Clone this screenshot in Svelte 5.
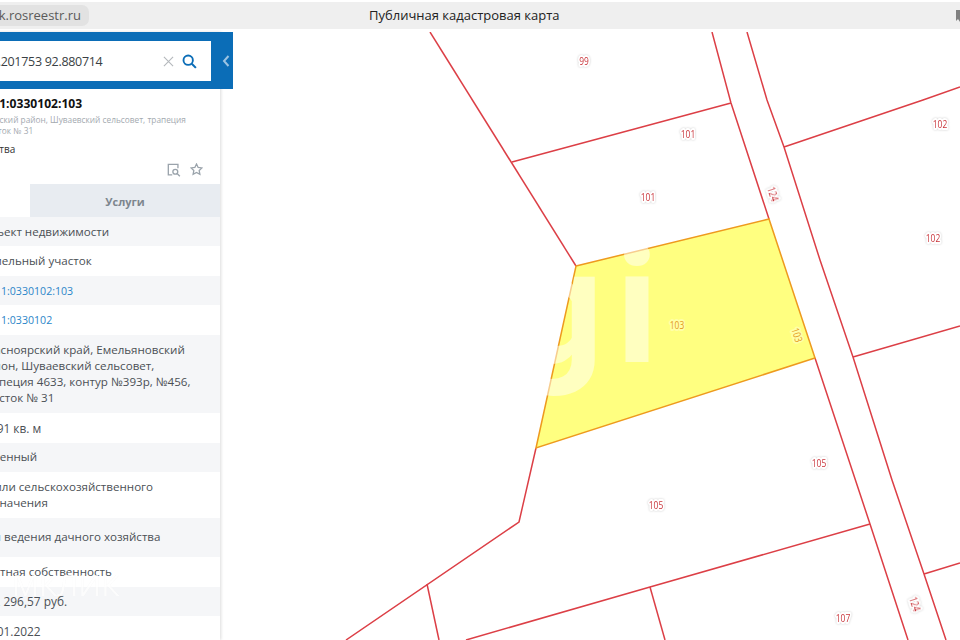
<script lang="ts">
  const rows = [
    { text: 'Объект недвижимости' },
    { text: 'Земельный участок' },
    { text: '24:11:0330102:103', link: true },
    { text: '24:11:0330102', link: true },
    { text: 'Красноярский край, Емельяновский\nрайон, Шуваевский сельсовет,\nтрапеция 4633, контур №393р, №456,\nучасток № 31' },
    { text: '2 491 кв. м', num: true },
    { text: 'Учтенный' },
    { text: 'Земли сельскохозяйственного\nназначения' },
    { text: 'Для ведения дачного хозяйства', tall: true },
    { text: 'Частная собственность' },
    { text: '182 296,57 руб.', num: true },
    { text: '19.01.2022', num: true }
  ];

  const lines = [
    [[430, 32], [576, 266]],
    [[512, 162], [731, 103]],
    [[712, 32], [731, 103], [769, 219]],
    [[815, 358], [870, 524], [908, 640]],
    [[747, 32], [767, 100], [784, 147], [820, 260], [853, 357], [892, 480], [924, 574], [946, 640]],
    [[784, 147], [923, 100], [960, 87]],
    [[853, 357], [960, 326]],
    [[924, 574], [960, 563]],
    [[870, 524], [650, 587], [466, 640]],
    [[650, 587], [665, 640]],
    [[536, 448], [519, 522], [346, 640]],
    [[427, 584], [439, 640]]
  ];

  const labels = [
    { t: '99', x: 584, y: 61 },
    { t: '101', x: 688, y: 134 },
    { t: '101', x: 648, y: 197 },
    { t: '102', x: 940, y: 124 },
    { t: '102', x: 933, y: 238 },
    { t: '124', x: 773, y: 194, r: 72 },
    { t: '105', x: 819, y: 463 },
    { t: '105', x: 656, y: 505 },
    { t: '107', x: 843, y: 618 },
    { t: '124', x: 915, y: 604, r: 72 }
  ];

  const points = (l: number[][]) => l.map((p) => p.join(',')).join(' ');
</script>

<div class="page">
  <header class="chrome">
    <div class="url">pkk.rosreestr.ru</div>
    <div class="tab-title">Публичная кадастровая карта</div>
    <svg class="bookmark" width="4" height="12" viewBox="0 0 4 12"><path d="M0 0h4v12l-2-3-2 2z" fill="#808080" /></svg>
  </header>

  <main class="stage">
    <svg class="map" width="960" height="608" viewBox="0 32 960 608">
      <polygon class="parcel" points="576,266 769,219 815,358 536,448" />
      {#each lines as l}
        <polyline class="boundary" points={points(l)} />
      {/each}
      <polygon class="parcel-edge" points="576,266 769,219 815,358 536,448" />
      {#each labels as l}
        <text class="label" x={l.x} y={l.y + 3.7} textLength={l.t.length * 4.8} lengthAdjust="spacingAndGlyphs" transform={l.r ? `rotate(${l.r} ${l.x} ${l.y})` : undefined}>{l.t}</text>
      {/each}
      <text class="label orange" x="677" y="328.7" textLength="14.4" lengthAdjust="spacingAndGlyphs">103</text>
      <text class="label orange" x="797" y="338.7" textLength="14.4" lengthAdjust="spacingAndGlyphs" transform="rotate(72 797 335)">103</text>
      <text class="mark" x="511" y="362">gi</text>
    </svg>

    <aside class="panel">
      <div class="search-bar">
        <div class="search">
          <span class="query">56.201753 92.880714</span>
          <svg class="clear" width="11" height="11" viewBox="0 0 12 12"><path d="M1 1l10 10M11 1L1 11" stroke="#b4b8bc" stroke-width="1.2" fill="none" /></svg>
          <svg class="find" width="15" height="15" viewBox="0 0 16 16"><circle cx="6.6" cy="6.6" r="5" stroke="#0b6db7" stroke-width="2" fill="none" /><path d="M10.4 10.4l4.4 4.4" stroke="#0b6db7" stroke-width="2.2" fill="none" /></svg>
        </div>
        <svg class="collapse" width="8" height="12" viewBox="0 0 8 12"><path d="M6.5 1L2 6l4.5 5" stroke="#9cc3e2" stroke-width="2" fill="none" /></svg>
      </div>

      <section class="summary">
        <h1>24:11:0330102:103</h1>
        <p class="address">яновский район, Шуваевский сельсовет, трапеция<br />участок № 31</p>
        <p class="kind">Свойства</p>
        <div class="actions">
          <svg width="14" height="14" viewBox="0 0 16 16" fill="none" stroke="#9aa3ab" stroke-width="1.5"><path d="M6 13.5H1.5V1.5h11V6" /><circle cx="9.5" cy="10" r="2.8" /><path d="M11.5 12l3.2 3.2" /></svg>
          <svg width="13" height="13" viewBox="0 0 15 15" fill="none" stroke="#9aa3ab" stroke-width="1.5"><path d="M7.5 1.2l1.9 4 4.4.5-3.2 3 .8 4.4-3.9-2.2-3.9 2.2.8-4.4-3.2-3 4.4-.5z" /></svg>
        </div>
      </section>

      <nav class="tabs">
        <div class="tab active"></div>
        <div class="tab">Услуги</div>
      </nav>

      <div class="rows">
        {#each rows as row}
          <div class="row" class:tall={row.tall} class:link={row.link} class:num={row.num}>{row.text}</div>
        {/each}
      </div>
      <div class="stamp">МКЛИК</div>
    </aside>
  </main>
</div>

<style>
  :global(body) {
    margin: 0;
    background: #fff;
  }

  .page {
    width: 960px;
    height: 640px;
    display: flex;
    flex-direction: column;
    overflow: hidden;
    font-family: "Open Sans", sans-serif;
    background: #fff;
  }

  .chrome {
    height: 27px;
    margin: 2px 0 3px;
    flex: none;
    display: flex;
    align-items: center;
    background: #efefef;
  }

  .url {
    width: 109px;
    height: 21px;
    margin-left: -20px;
    flex: none;
    box-sizing: border-box;
    padding-right: 8px;
    border-radius: 0 7px 7px 0;
    background: #e2e2e2;
    color: #5a5a5a;
    font-size: 13px;
    line-height: 21px;
    text-align: right;
  }

  .tab-title {
    margin-left: 280px;
    padding-bottom: 2px;
    color: #222;
    font-size: 13px;
  }

  .bookmark {
    margin-left: auto;
  }

  .stage {
    position: relative;
    flex: 1;
    min-height: 0;
  }

  .map {
    position: absolute;
    inset: 0;
  }

  .parcel {
    fill: #ffff80;
  }

  .parcel-edge {
    fill: none;
    stroke: #ee9a1e;
    stroke-width: 1.5;
  }

  .boundary {
    fill: none;
    stroke: #dc3f46;
    stroke-width: 1.5;
  }

  .label {
    fill: #c9363c;
    stroke: #fff;
    stroke-width: 4px;
    stroke-linejoin: round;
    paint-order: stroke;
    font-family: "Open Sans", sans-serif;
    font-size: 10.5px;
    text-anchor: middle;
    filter: drop-shadow(0 0 1px rgba(0, 0, 0, 0.2));
  }

  .label.orange {
    fill: #e59a1c;
    stroke: #ffffa8;
    filter: none;
  }

  .mark {
    fill: rgba(255, 255, 255, 0.5);
    font-family: Roboto, sans-serif;
    font-size: 162px;
    font-weight: 700;
    letter-spacing: 12px;
  }

  .panel {
    position: relative;
    width: 260px;
    height: 100%;
    margin-left: -40px;
    background: #fff;
    box-shadow: 1px 0 3px rgba(0, 0, 0, 0.14);
  }

  .search-bar {
    width: 273px;
    height: 57px;
    box-sizing: border-box;
    padding: 9px 0 8px;
    display: flex;
    align-items: center;
    background: #0b6db7;
  }

  .search {
    width: 251px;
    height: 40px;
    flex: none;
    box-sizing: border-box;
    padding: 0 14px 0 24px;
    display: flex;
    align-items: center;
    background: #fff;
  }

  .query {
    color: #3a3f44;
    font-size: 12.5px;
    letter-spacing: -0.3px;
    white-space: nowrap;
  }

  .clear {
    margin-left: auto;
    flex: none;
  }

  .find {
    margin-left: 8px;
    flex: none;
  }

  .collapse {
    margin-left: 11px;
  }

  .summary {
    height: 95px;
    box-sizing: border-box;
    padding: 7px 20px 0;
    position: relative;
  }

  h1 {
    margin: 0 0 0 -5px;
    color: #111;
    font-size: 12.1px;
    font-weight: 700;
    line-height: 16px;
  }

  .address {
    margin: 3px 0 0;
    color: #a3a9af;
    font-size: 8.3px;
    line-height: 10.5px;
    white-space: nowrap;
  }

  .kind {
    margin: 6px 0 0 -10px;
    color: #333;
    font-size: 10px;
    line-height: 14px;
  }

  .actions {
    position: absolute;
    right: 17px;
    top: 74px;
    display: flex;
    gap: 9px;
  }

  .tabs {
    height: 33px;
    display: flex;
  }

  .tab {
    display: flex;
    align-items: center;
    justify-content: center;
    padding-top: 1px;
    color: #7d868e;
    font-size: 11px;
    font-weight: 700;
    flex: 1;
    background: #e8ecf1;
  }

  .tab.active {
    flex: none;
    width: 70px;
    background: #fff;
  }

  .row {
    padding: 6.6px 0 6.6px 20px;
    color: #4b5055;
    font-size: 11.6px;
    line-height: 16.3px;
    white-space: pre-line;
  }

  .row:nth-child(odd) {
    background: #f5f6f8;
  }

  .row.tall {
    padding: 11.4px 0 11.4px 20px;
  }

  .row.num {
    font-size: 11.9px;
  }

  .row.link {
    color: #2a85c8;
    font-size: 10.6px;
  }

  .stamp {
    position: absolute;
    left: 52px;
    top: 532px;
    color: #fff;
    font-size: 30px;
    text-shadow: 0 0 1px rgba(0, 0, 0, 0.08);
    opacity: 0.7;
  }
</style>
